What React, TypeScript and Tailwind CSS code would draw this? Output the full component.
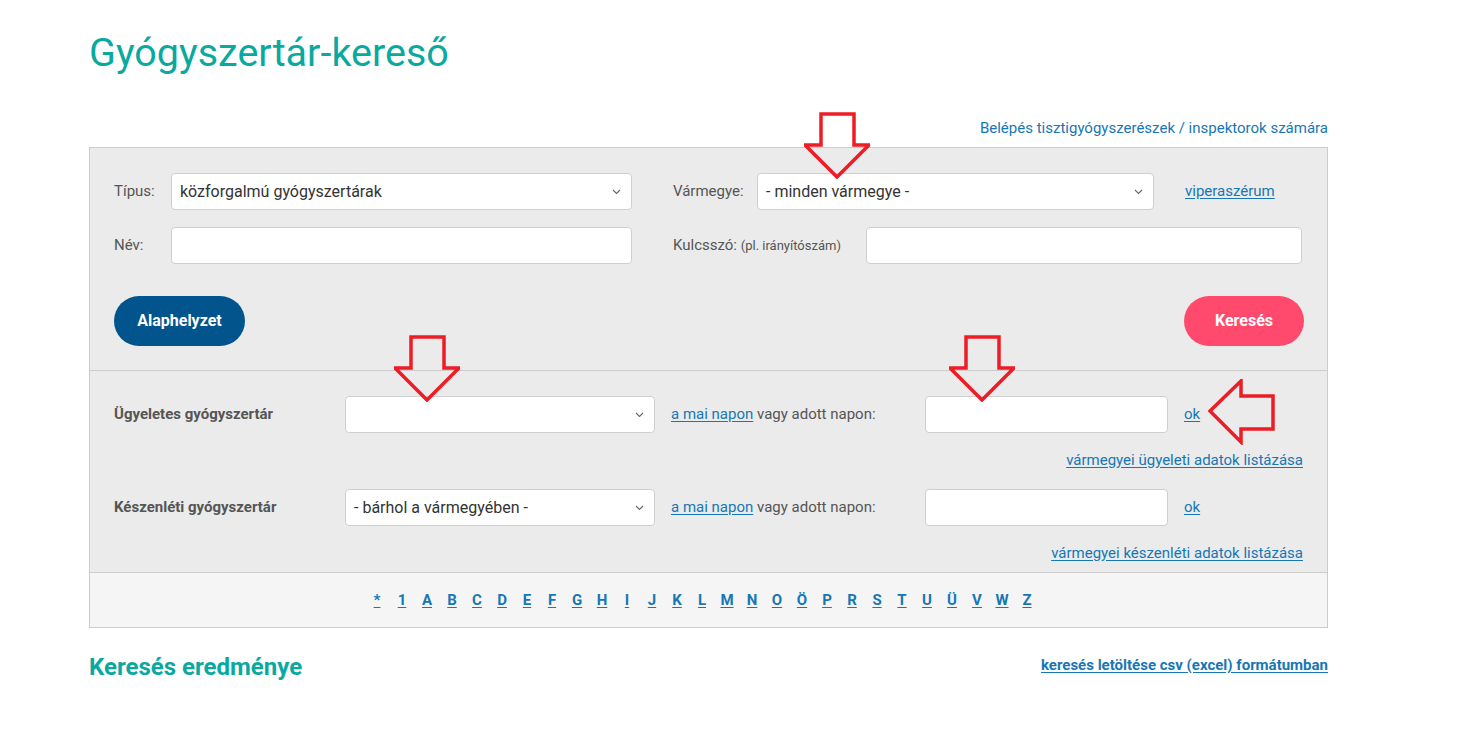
import React from "react";

const Chevron = () => (
  <svg width="9" height="6" viewBox="0 0 9 6" className="shrink-0">
    <path d="M1 1l3.5 3.5L8 1" fill="none" stroke="#666" strokeWidth="1.1" />
  </svg>
);

function SelectBox({ value, w }: { value: string; w: string }) {
  return (
    <div
      className={`${w} h-[37px] bg-white border border-[#cfcfcf] rounded-[4px] flex items-center justify-between pl-[8px] pr-[10px] text-[16px] text-[#333]`}
    >
      <span>{value}</span>
      <Chevron />
    </div>
  );
}

function InputBox({ w }: { w: string }) {
  return <div className={`${w} h-[37px] bg-white border border-[#cfcfcf] rounded-[4px]`} />;
}

function DownArrow({ left, top }: { left: string; top: string }) {
  return (
    <svg width="66" height="67" viewBox="0 0 66 67" className={`absolute ${left} ${top}`}>
      <polygon
        points="17,2 50,2 50,33 65,33 33,65 1,33 17,33"
        fill="none"
        stroke="#ee1c25"
        strokeWidth="3.5"
        strokeLinejoin="miter"
      />
    </svg>
  );
}

function LeftArrow({ left, top }: { left: string; top: string }) {
  return (
    <svg width="68" height="66" viewBox="0 0 68 66" className={`absolute ${left} ${top}`}>
      <polygon
        points="2,32 33,2 33,17 65,17 65,50 33,50 33,63"
        fill="none"
        stroke="#ee1c25"
        strokeWidth="3.5"
      />
    </svg>
  );
}

const letters = ["*", "1", "A", "B", "C", "D", "E", "F", "G", "H", "I", "J", "K", "L", "M", "N", "O", "Ö", "P", "R", "S", "T", "U", "Ü", "V", "W", "Z"];

export default function App() {
  const link = "text-[#1777b4] underline underline-offset-2";
  return (
    <div
      className="relative w-[1484px] min-h-[748px] bg-white"
      style={{ fontFamily: "Roboto, 'Liberation Sans', sans-serif" }}
    >
      <div className="ml-[89px] w-[1239px] pb-[60px]">
        <h1 className="pt-[29px] text-[39.5px] leading-[48px] text-[#0aa9a0] font-normal">
          Gyógyszertár-kereső
        </h1>
        <div className="mt-[41px] h-[20px] text-right text-[15px] leading-[20px] text-[#1777b4]">
          Belépés tisztigyógyszerészek / inspektorok számára
        </div>
        <div className="mt-[9px] border border-[#cccccc] bg-[#ebebeb]">
          {/* section 1 */}
          <div className="pl-[24px] pr-[23px] pt-[25px] pb-[24px]">
            <div className="flex items-center">
              <span className="w-[57px] text-[15px] text-[#555]">Típus:</span>
              <SelectBox value="közforgalmú gyógyszertárak" w="w-[461px]" />
              <span className="ml-[41px] w-[84px] text-[15px] text-[#555]">Vármegye:</span>
              <SelectBox value="- minden vármegye -" w="w-[397px]" />
              <span className={`ml-[31px] text-[15px] ${link}`}>viperaszérum</span>
            </div>
            <div className="flex items-center mt-[17px]">
              <span className="w-[57px] text-[15px] text-[#555]">Név:</span>
              <InputBox w="w-[461px]" />
              <span className="ml-[41px] w-[193px] text-[15px] text-[#555]">
                Kulcsszó: <span className="text-[13px]">(pl. irányítószám)</span>
              </span>
              <InputBox w="w-[436px]" />
            </div>
            <div className="flex justify-between mt-[32px]">
              <button className="w-[131px] h-[50px] rounded-full bg-[#02548c] text-white font-bold text-[16px]">
                Alaphelyzet
              </button>
              <button className="w-[120px] h-[50px] rounded-full bg-[#ff4a6d] text-white font-bold text-[16px]">
                Keresés
              </button>
            </div>
          </div>
          {/* section 2 */}
          <div className="border-t border-[#cccccc] pl-[24px] pr-[24px] pt-[25px] pb-[9px]">
            <div className="flex items-center">
              <span className="w-[231px] text-[15px] font-bold text-[#555]">Ügyeletes gyógyszertár</span>
              <SelectBox value="" w="w-[310px]" />
              <span className="ml-[16px] w-[254px] text-[15px] text-[#555]">
                <span className={link}>a mai napon</span> vagy adott napon:
              </span>
              <InputBox w="w-[243px]" />
              <span className={`ml-[16px] text-[15px] ${link}`}>ok</span>
            </div>
            <div className="mt-[17px] h-[20px] text-right text-[15px] leading-[20px]">
              <span className={link}>vármegyei ügyeleti adatok listázása</span>
            </div>
            <div className="flex items-center mt-[19px]">
              <span className="w-[231px] text-[15px] font-bold text-[#555]">Készenléti gyógyszertár</span>
              <SelectBox value="- bárhol a vármegyében -" w="w-[310px]" />
              <span className="ml-[16px] w-[254px] text-[15px] text-[#555]">
                <span className={link}>a mai napon</span> vagy adott napon:
              </span>
              <InputBox w="w-[243px]" />
              <span className={`ml-[16px] text-[15px] ${link}`}>ok</span>
            </div>
            <div className="mt-[17px] h-[20px] text-right text-[15px] leading-[20px]">
              <span className={link}>vármegyei készenléti adatok listázása</span>
            </div>
          </div>
          {/* alphabet */}
          <div className="border-t border-[#cccccc] bg-[#f5f5f5] h-[55px] flex items-center justify-center pr-[13px]">
            {letters.map((l) => (
              <span key={l} className="w-[25px] text-center text-[15px] font-bold">
                <span className={link}>{l}</span>
              </span>
            ))}
          </div>
        </div>
        <div className="mt-[24px] flex items-center justify-between h-[30px]">
          <span className="text-[24px] font-bold text-[#0aa9a0]">Keresés eredménye</span>
          <span className={`text-[15px] font-bold ${link} -mt-[4px]`}>
            keresés letöltése csv (excel) formátumban
          </span>
        </div>
      </div>
      <DownArrow left="left-[804px]" top="top-[112px]" />
      <DownArrow left="left-[394px]" top="top-[335px]" />
      <DownArrow left="left-[949px]" top="top-[335px]" />
      <LeftArrow left="left-[1208px]" top="top-[379px]" />
    </div>
  );
}
